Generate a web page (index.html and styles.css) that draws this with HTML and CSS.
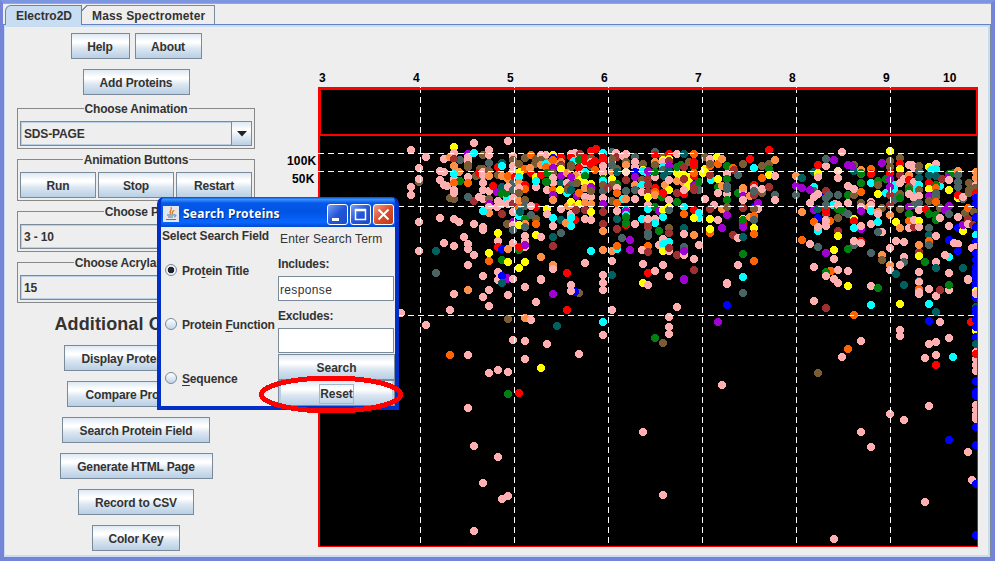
FILE: index.html
```html
<!DOCTYPE html>
<html lang="en">
<head>
<meta charset="utf-8">
<title>Electro2D</title>
<link rel="stylesheet" href="styles.css">
</head>
<body>
<div class="window">
  <nav class="tabs">
    <div class="tab selected">Electro2D</div>
    <div class="tab">Mass Spectrometer</div>
  </nav>
  <main class="pane">
    <section class="controls">
      <div class="row top"><button class="btn w59">Help</button><button class="btn w67">About</button></div>
      <button class="btn w107 add">Add Proteins</button>
      <div class="group"><span class="legend">Choose Animation</span>
        <div class="combo"><span>SDS-PAGE</span><i class="drop"><svg width="10" height="6"><path d="M0 0h10L5 5.5z" fill="#222"/></svg></i></div>
      </div>
      <div class="group g2"><span class="legend">Animation Buttons</span>
        <div class="trio"><button class="btn">Run</button><button class="btn">Stop</button><button class="btn">Restart</button></div>
      </div>
      <div class="group"><span class="legend">Choose PH</span>
        <div class="combo"><span>3 - 10</span><i class="drop"></i></div>
      </div>
      <div class="group"><span class="legend">Choose Acrylamide %</span>
        <div class="combo"><span>15</span><i class="drop"></i></div>
      </div>
      <h1>Additional Options</h1>
      <div class="stack">
        <button class="btn w144">Display Protein List</button>
        <button class="btn w138">Compare Proteins</button>
        <button class="btn w148">Search Protein Field</button>
        <button class="btn w153">Generate HTML Page</button>
        <button class="btn w116">Record to CSV</button>
        <button class="btn w88">Color Key</button>
      </div>
    </section>
    <svg class="plot" width="710" height="490" viewBox="275 60 710 490">
      <g class="axis">
        <text x="319" y="82">3</text><text x="413" y="82">4</text><text x="507" y="82">5</text><text x="601" y="82">6</text><text x="695" y="82">7</text><text x="789" y="82">8</text><text x="883" y="82">9</text><text x="943" y="82">10</text>
        <text x="287" y="165">100K</text><text x="292" y="183">50K</text>
      </g>
      <g shape-rendering="crispEdges">
        <rect x="318" y="87" width="660" height="460" fill="#f00"/>
        <rect x="321" y="90" width="655" height="44" fill="#000"/>
        <rect x="320" y="136" width="657" height="410" fill="#000"/>
        <svg x="320" y="136" width="657" height="410" viewBox="320 136 657 410"><g id="spots"></g></svg>
        <path class="grid" d="M420.5 87V546M514.5 87V546M608.5 87V546M702.5 87V546M796.5 87V546M890.5 87V546M318 153.5H976M318 171.5H976M318 206.5H976M318 315.5H976"/>
        <path d="M318 88.500H978M318 135H978" stroke="#f00" stroke-width="2"/>
      </g>
    </svg>
  </main>
</div>

<div class="dialog">
  <header class="titlebar">
    <svg class="java" width="16" height="16"><rect width="16" height="16" fill="#e4e6ea"/><path d="M8 8C5 5 10 4 8 1M10 8c-2-2 1-3 1-4" fill="none" stroke="#e87820" stroke-width="1.300"/><path d="M4 9h7M5 11h5M3 13.500h10M11 9c3-1 2 2 0 2" fill="none" stroke="#50799d"/></svg>
    <span class="title">Search Proteins</span>
    <i class="wb"><svg width="21" height="21"><path d="M5 14h7v3H5z" fill="#fff"/></svg></i>
    <i class="wb"><svg width="21" height="21"><path d="M5.500 5.500h10v10h-10zM5 6.500h11" fill="none" stroke="#fff" stroke-width="1.500"/></svg></i>
    <i class="wb close"><svg width="21" height="21"><path d="M5.500 5.500l10 10M15.500 5.500l-10 10" stroke="#fff" stroke-width="2"/></svg></i>
  </header>
  <div class="body">
    <div class="fields">
      <div class="head">Select Search Field</div>
      <div class="radio"><i class="dot on"></i><span>Pro<u>t</u>ein Title</span></div>
      <div class="radio"><i class="dot"></i><span>Protein <u>F</u>unction</span></div>
      <div class="radio"><i class="dot"></i><span><u>S</u>equence</span></div>
    </div>
    <div class="terms">
      <div class="enter">Enter Search Term</div>
      <div class="lab">Includes:</div>
      <div class="input">response</div>
      <div class="lab">Excludes:</div>
      <div class="input"></div>
      <button class="btn">Search</button>
      <button class="btn reset"><span>Reset</span></button>
    </div>
  </div>
</div>
<svg class="marker" width="146" height="42"><ellipse cx="73" cy="20.500" rx="69.500" ry="16.500" fill="none" stroke="#f00" stroke-width="5" shape-rendering="crispEdges"/></svg>
<script src="spots.js"></script>
</body>
</html>
```
FILE: styles.css
```css
* { box-sizing: border-box; }
body { margin: 0; width: 995px; height: 561px; overflow: hidden; position: relative; background: #eee; font: bold 12px/14px "Liberation Sans", Arial, sans-serif; color: #333; letter-spacing: -.16px; }
.window { width: 995px; height: 561px; border: solid #7485d9; border-top-color: #7d96e2; border-width: 3px 4px 3px 3px; display: flex; flex-direction: column; background: #eee; box-shadow: inset 0 1px #8fa6ea; }
.tabs { height: 21px; display: flex; align-items: flex-end; padding-left: 2px; }
.tab { height: 19px; width: 133px; padding: 3px 0 0 10px; border: 1px solid #7a8a99; border-width: 1px 1px 0 0; letter-spacing: .16px; white-space: nowrap; position: relative; }
.tab:not(.selected)::before { content: ""; position: absolute; left: 0; top: -1px; width: 6px; height: 6px; background: linear-gradient(135deg, #eee 0 3.500px, #7a8a99 3.500px 4.500px, transparent 4.500px); }
.tab.selected { height: 20px; width: 77px; background: #c8ddf2; border: 1px solid #6382bf; border-bottom: 0; border-top-left-radius: 6px; padding-top: 3px; margin-bottom: -1px; z-index: 1; letter-spacing: 0; }
.pane { flex: 1; border: 1px solid #7a8a99; border-top-color: #6382bf; box-shadow: inset 1px 2px #c8ddf2, inset -2px -2px #c8ddf2; display: flex; }
.controls { width: 251px; padding: 8px 0 0 13px; display: flex; flex-direction: column; align-items: center; flex: none; }
.controls > * { flex: none; }
.btn { height: 26px; padding: 1px 0 0; border: 1px solid #7a8a99; border-radius: 0; font: inherit; color: #333; letter-spacing: inherit; text-align: center; white-space: nowrap; background: linear-gradient(#dde8f3 0, #fff 30%, #fff 36%, #dbe6f1 60%, #b8cfe5 100%); }
.row { display: flex; gap: 5px; }
.w59 { width: 59px; } .w67 { width: 67px; } .w107 { width: 107px; } .w144 { width: 144px; } .w138 { width: 138px; } .w148 { width: 148px; } .w153 { width: 153px; } .w116 { width: 116px; } .w88 { width: 88px; }
.add { margin: 10px 0 6px; }
.group { width: 238px; height: 48px; margin-bottom: 3px; padding: 0 2px; position: relative; display: flex; flex-direction: column; align-items: center; }
.group::before { content: ""; position: absolute; inset: 7px 0 0 0; border: 1px solid #888; }
.group.g2 { height: 49px; margin-bottom: 3px; }
.legend { position: relative; background: #eee; padding: 0 1px; height: 14px; margin-top: 1px; }
.combo { position: relative; margin-top: 5px; width: 232px; height: 25px; border: 1px solid #7a8a99; box-shadow: inset 0 0 0 1px #b8cfe5; display: flex; justify-content: space-between; align-items: center; padding-left: 3px; }
.drop { width: 20px; height: 23px; border-left: 1px solid #7a8a99; background: linear-gradient(#dde8f3, #fff 35%, #b8cfe5); display: flex; align-items: center; justify-content: center; }
.trio { position: relative; margin-top: 5px; display: grid; grid-template-columns: repeat(3, 76px); gap: 2px; }
h1 { font-size: 18px; line-height: 22px; margin: 7px 0 10px; letter-spacing: .12px; }
.stack { display: flex; flex-direction: column; align-items: center; gap: 10px; }
.plot { margin: 35px 0 0 20px; flex: none; }
.axis text { font: bold 12px "Liberation Sans", Arial, sans-serif; fill: #000; letter-spacing: .2px; }
.grid { stroke: #fff; stroke-width: 1; stroke-dasharray: 6 4; fill: none; }
.dialog { position: absolute; left: 157px; top: 197px; width: 242px; height: 213px; border: solid #0030c8; border-width: 0 4px 4px; border-radius: 7px 7px 0 0; background: #0050e0; overflow: hidden; box-shadow: inset 0 0 0 1px #0855dd; }
.titlebar { margin: 0 -4px; height: 30px; padding: 4px 5px 0 6px; background: linear-gradient(#0048d0 0, #3a94ff 8%, #0558e8 20%, #0054e3 50%, #0866ff 85%, #0048d0 100%); display: flex; align-items: center; }
.title { flex: 1; margin-left: 4px; color: #fff; font: bold 12px/16px "Noto Sans", sans-serif; letter-spacing: .25px; text-shadow: 1px 1px #002a80; }
.wb { width: 21px; height: 21px; margin-left: 2px; border: 1px solid #fff; border-radius: 3px; background: linear-gradient(135deg, #7ba0f5, #2356d8 50%, #1a4bc8); display: flex; align-items: center; justify-content: center; overflow: hidden; }
.wb svg { flex: none; }
.close { background: linear-gradient(135deg, #f0a088, #dc4d28 50%, #b83818); }
.body { height: 179px; background: #eee; display: grid; grid-template-columns: 117px 117px; }
.fields { white-space: nowrap; }
.head { padding: 2px 0 0 1px; height: 16px; }
.radio { height: 54px; display: flex; align-items: center; padding-left: 4px; }
.radio span { padding-top: 2px; }
.dot { width: 12px; height: 12px; border-radius: 50%; border: 1px solid #7a8a99; background: linear-gradient(#fff, #c0d4e8); margin-right: 5px; flex: none; }
.dot.on { background: radial-gradient(circle, #222 0 3px, #e8f0f8 3.600px); }
u { text-decoration: underline; text-underline-offset: 2px; }
.terms { display: flex; flex-direction: column; }
.enter { font-weight: normal; padding: 5px 0 0 2px; height: 28px; letter-spacing: .15px; white-space: nowrap; }
.lab { height: 21px; padding-top: 2px; }
.input { height: 25px; margin: 0 1px 6px 0; background: #fff; border: 1px solid #7a8a99; font-weight: normal; padding: 6px 0 0 1px; letter-spacing: .35px; }
.input + .btn { margin-top: -5px; }
.terms .btn { width: 117px; flex: none; letter-spacing: 0; }
.reset { border-color: #7a8a99; box-shadow: inset 2px 0 #b8cfe5, inset -2px 0 #b8cfe5; }
.reset span { border: 1px solid #a3b8cc; padding: 2px 0; }
.marker { position: absolute; left: 258px; top: 374px; }
```
FILE: spots.js
```js
// Protein spots, grouped by plot region. Each entry is a colour letter followed by
// an x,y offset from the region origin, in thirds of a pixel, in stacking order.
const colors = { p: '#ffafaf', y: '#ffff00', c: '#00ffff', r: '#ff0000', g: '#008010', t: '#006060', s: '#486464', w: '#7a5c34', o: '#ff6400', l: '#ff9048', m: '#a03030', v: '#a000d0', b: '#0000ff', k: '#ffdcc0' };
const regions = [
  [400, 130, `p33,61 p78,81 p57,113 w57,155 p57,148 p33,171 p33,195 p57,275 p57,363 t108,363 s108,429 p120,264 p120,124 p132,87 p132,126 p120,150 p132,164 p142,168 l150,82 s180,90 y162,50 p162,70 m162,87 l162,108 l178,126 p162,146 c162,131 g180,153 o162,158 p162,180 w150,204 w162,208 p162,190
  p162,267 p177,275 p132,339 p162,348 p192,321 p204,342 p204,358 p222,375 p204,405 v204,72 p204,81 p204,92 w204,104 w204,112 p204,140 o204,158 s204,201 m222,213 p222,39 c222,69 p222,282 w249,74 p267,60 p267,75 s267,99 w240,116 w228,138 r236,128 w249,117 p249,126 s249,141 p249,134 w267,123 l267,138 p249,160 p249,180 p267,183 p237,200 p249,206 w267,206 v267,222 p267,232 l267,250 c249,243 p249,290 p249,300 p249,438 y267,369 o267,393
  t306,98 r293,111 c306,108 w293,134 l306,138 r280,169 v292,186 t306,170 p293,212 g306,192 c322,205 g318,190 p306,222 p292,232 m306,252 y293,309 p293,333 r293,351 p293,426 b306,357 g306,390 b306,438 y324,396 v322,444 l324,357 p324,33 p324,222 p339,78 w339,90 p339,108 p339,122 l324,147 s339,158 p324,170 s339,180 p339,205 m339,222 p339,245 v339,275 w322,282 p339,286 s339,300 p339,338 p339,447 o324,138
  w357,102 w375,84 r345,140 y360,125 c357,140 o375,118 l357,160 r375,165 o375,176 p357,175 w357,190 l357,212 w375,210 o357,235 c357,258 t360,245 s375,228 g375,267 l375,282 y357,285 s375,291 p375,318 p375,333 p375,352 g357,360 r357,351 v375,345 y375,396 y357,414 o393,75 w408,87 w422,80 w405,103 r393,130 l390,115 r424,135 y408,140 p408,170 c408,153 g440,156 r408,231 p393,228 s393,255 w408,268 o408,282 y408,315 p423,321 l423,381 p423,447 p438,75 l438,95 o442,100 r440,114 r449,130 p440,180 y440,237 p440,252`],
  [540, 130, `p3,75 w3,90 l3,105 r3,136 c18,103 o18,112 g18,156 y39,75 l40,100 b40,83 o39,90 r64,80 l63,97 m63,104 w64,112 v39,115 y62,116 w39,130 g20,130 v63,138 p39,143 p39,160 t63,160 g20,157 o39,180 y60,180 v39,194 l39,210 y21,237 p21,252 c39,264 p39,288 t63,270 s63,309 t39,321 m39,348 p3,321 l3,381 l39,405 p39,417 r81,429 p3,447 p135,399 p63,237 l85,229 l79,280 p93,252 r106,270 c93,265 c93,288
  p93,72 p105,68 m120,72 r93,80 c103,94 w94,110 w93,105 g116,89 l80,130 p110,135 l104,138 v93,142 r116,114 y120,150 c80,189 p80,160 s93,165 m83,175 w83,180 t93,180 v110,198 o117,188 y93,215 l105,230 y118,222 m108,240 w110,160 r135,83 p135,100 r135,92 w154,83 c135,125 g135,137 y135,158 l135,175 w152,180 p153,200 p135,201 l135,220 m135,240 p135,267 p154,269 r152,62 r168,57 p154,95 w154,108 r165,92 r154,102 o165,120 y152,163 v154,170 w153,183 l154,222 y153,246 c153,363
  c190,68 y189,130 r189,80 r189,94 p189,108 p190,125 g190,146 c189,153 w189,165 o205,175 s189,183 p189,205 v189,222 m189,246 m189,282 l189,303 l189,360 p189,435 s216,66 p228,70 m231,82 p216,97 w216,87 l216,125 w231,117 s216,104 t231,126 y216,148 g231,163 w216,165 p231,175 o231,188 c249,207 w216,213 o231,220 p231,243 t231,267 m231,297 l216,363 c231,357 o231,348 p216,393 t216,435 s246,324
  p248,78 p258,72 w258,96 l258,106 k258,126 m258,150 s258,183 l258,206 c258,240 v258,243 c258,255 g258,262 r258,285 g258,280 p285,282 v270,330 v270,360 s285,82 p285,96 p285,111 b285,127 v285,140 l285,165 s285,180 p285,207 w308,103 y308,120 c308,124 w307,150 c306,165 p306,185 c322,130 v323,123 m323,146 s345,66 r345,74 l345,95 w345,104 p345,140 g345,125 m323,165 m323,185 y324,202 p324,225 c324,238
  w368,82 y369,90 p369,95 c369,110 s369,120 t373,138 l375,165 r345,174 o345,185 l345,194 g366,201 p387,210 r387,72 y387,87 m387,94 v387,107 t387,124 p387,150 y387,180 l410,153 y410,129 p410,72 g410,110 m410,190 r431,193 p431,180 t432,72 m432,111 y433,135 m433,147 y445,156 g345,230 v356,244 y369,240 c369,262 y387,232 s387,240 g411,215 c432,231 o432,252 p345,267 c345,279 m324,278 c306,267 p324,267 m324,292 s324,308 g357,303 w387,295 m387,310 t432,294 p432,312
  p369,327 p357,345 c369,342 y369,363 c387,336 p387,363 m387,354 s324,318 o324,348 p306,360 m324,366 m411,375 p309,402 r324,429 p345,423 p369,405 p387,438 v432,363 p432,376 v432,447 m205,175 r370,190`],
  [680, 130, `t12,72 o42,72 g3,105 m12,111 w26,96 r42,96 g42,112 r42,105 y3,134 l12,160 y26,156 y30,140 r42,138 o42,130 y18,175 r12,190 p12,180 m12,147 v42,165 g58,157 s58,180 m42,180 m42,174 c12,231 o12,252 r42,240 c58,250 c58,264 y42,264 t12,294 p12,312 l42,315 s12,352 p12,376 v12,363 p57,345 p42,387 m42,420 v12,447
  w75,81 y75,117 y70,130 l89,90 p89,88 o89,108 w89,102 y112,81 o114,102 l126,87 g141,107 o158,114 m162,120 c92,150 y90,136 m90,136 y114,147 g114,170 p114,189 l126,168 p141,132 g141,148 p141,192 s141,168 s141,176 g141,210 s174,135 g174,190 w189,102 r210,87 c222,114 w246,108 w267,102 g267,117 y267,135 r267,60 l285,90 p285,138 o246,144 p75,207 p102,225 m90,237 l126,237 w141,231 v141,255 p114,270 y90,267 o90,309 y90,297 v126,294 m158,315 p174,324 t189,321
  p189,184 l189,174 v189,198 p189,210 m189,234 l210,198 r222,165 p222,174 m222,194 s222,183 w246,190 p246,178 m267,171 s285,195 p285,210 y189,267 r189,280 g189,271 v189,291 b222,231 v234,219 p234,237 w222,238 l210,262 o222,258 s222,270 y222,294 o222,312 g189,372 o222,393 p174,405 c189,440 p141,459 l348,138 v348,168 s348,195 t366,144 v366,174 l366,246 o366,330 s438,87 p438,108 r414,105 t402,126 y414,130 p414,141 c402,171 s402,183 v390,180 p414,192 p402,200 p390,219 v402,240 t414,237 b414,264 o402,276 c414,303 p414,290 p390,342 s414,351 v438,369 p402,411 g438,429 p438,438 o450,422
  b438,192 m438,183 s438,205 w438,228 r438,240 s438,252 p438,282 p438,270`],
  [825, 130, `p3,108 s3,87 v27,90 p51,66 k39,123 p39,144 m3,183 s12,195 s39,195 p30,222 c24,225 g39,237 p39,225 w39,264 o15,272 p3,288 p3,272 m39,303 y39,318 y27,360 v3,369 p27,387 o15,423 p39,420 p69,423 p27,447 g3,432 r3,246 s3,225 s58,246 g48,240 s69,252 p69,219 v69,105 w87,105 t87,122 g69,195 w87,195 p69,168 p87,176 v81,107
  l108,120 w108,132 g108,129 g108,160 o108,186 w108,219 p108,232 v108,243 y87,267 r87,272 v108,297 c87,294 s87,345 p108,288 r108,333 p108,339 p87,333 g69,357 o138,116 r138,132 c138,160 l132,230 p138,217 m138,222 p138,225 c138,243 p138,282 s138,369 g158,153 w158,165 y158,192 w170,234 l158,246 c158,276 p158,252 p171,306 s158,306 l171,375 w171,390 v171,99 g182,148 c182,190
  c210,165 s210,190 c208,177 s208,210 w196,92 y196,63 w196,112 r196,130 v196,148 v196,172 m196,195 m196,225 l196,255 p195,354 l195,405 p195,420 t213,432 p213,333 y213,276 l225,294 w225,84 r225,102 y225,118 m225,135 p225,159 w225,192 g225,205 w225,236 p237,147 p237,336 p237,381 s237,396 p225,405
  p252,104 p262,104 p267,115 l252,135 r252,150 p267,155 c267,180 w252,170 g252,180 p252,192 p267,205 s267,225 v252,231 g252,252 o252,272 p252,294 m267,290 p267,270 s282,122 w282,108 t282,145 c282,165 w282,180 p282,198 s282,220 p282,240 y282,272 p282,290 m282,365 l282,345 y282,378 p282,427 t282,452 g300,396 y312,110 c318,120 t312,135 r312,159 y312,176 v312,198 r302,237 w312,212 g312,252 s312,294 t312,316 o312,333 s312,345
  p333,102 c333,118 t333,137 c345,167 g333,165 o333,175 w333,200 s333,188 o333,215 w345,234 g333,255 g333,270 p345,265 p333,318 p333,396 t333,414 m352,147 g372,132 v372,140 p372,150 y372,180 v360,240 v372,228 s372,252 p372,288 b372,330 p387,340 p399,342 c372,381 p360,375 p372,429 g388,128 l399,123 s399,135 s399,155 s399,170 y399,205 r399,196 p399,261 b399,294 b399,363 t414,414 s414,207 p414,200
  y414,303 v414,285 w421,250 m429,267 o429,234 w432,158 w432,180 w432,190 p429,282 l453,125 l453,145 p453,165 w450,175 r453,188 b453,205 b453,222 w448,246 m444,286 b453,260 b453,292 c453,315 b453,335 p441,354 p453,350 b453,370 b453,390 b453,410 b453,430 p429,448`],
  [400, 270, `p4,129 p78,165 p162,72 p150,120 l204,60 o150,255 p204,255 p204,414 p222,528 p249,639 p222,783 p249,18 p249,81 p267,60 p267,108 p293,6 p293,29 v322,28 b306,18 t306,39 p324,75 p339,27 w324,147 p324,306 p293,300 p267,309 p339,210 g324,372 r357,369 p294,561 p324,678 p306,687 y357,-6 p375,51 l375,144 p393,150 p375,213 p375,267 p408,96 p423,30 y423,294 p441,222 v459,72 t471,168 p459,-3 r501,9 r501,120 w538,69 b526,66 p513,45 p513,63 p537,252 p609,15 p609,39 p609,60 c609,156 p609,195 t636,15 p636,120 y729,39 r744,9 p744,45 p765,3 p807,18 v852,30 m882,0 p831,111 p807,141 p807,171 p807,192 g765,204 w789,219 p729,486 p789,675`],
  [700, 270, `p81,38 p81,43 c129,21 s129,69 b81,105 v54,156 p66,345 p342,93 m378,114 o393,3 g378,6 p378,18 p402,27 p414,39 p414,0 p444,3 y444,48 p342,-9 c513,105 p513,48 g534,54 o462,135 p483,213 o444,237 p426,261 w354,309 p483,486 p513,531 p402,807 p570,432 p570,0 t588,12 t612,45 p612,450 y600,102 p600,180 p600,198 p657,6 p657,36 o657,58 p657,66 p657,71 p687,57 p708,78 m720,60 c687,102 t708,126 b687,153 p720,156 p747,9 p747,60 g747,45 p747,204 p708,216 p687,222 p708,255 p675,264 r708,285 c759,261 p687,408 b747,510 p804,30 p804,546 p816,630 p675,696 r812,156 t708,-6 t789,-6
  b827,5 b827,22 b827,40 b827,55 y827,62 b827,85 p827,72 t827,112 b827,116 b827,132 b827,150 y827,184 b827,172 b827,202 p827,245 t827,222 p827,268 r827,252 p827,285 p827,303 b827,333 b827,366 b827,378 p827,405 p827,420 p827,435 p827,447 b827,471 b827,525 b827,642 b827,796`]
];
const layer = document.getElementById('spots');
for (const [ox, oy, list] of regions) {
  for (const item of list.trim().split(/\s+/)) {
    const [x, y] = item.slice(1).split(',').map(Number);
    const c = document.createElementNS('http://www.w3.org/2000/svg', 'circle');
    c.setAttribute('cx', Math.round(ox + x / 3));
    c.setAttribute('cy', Math.round(oy + y / 3));
    c.setAttribute('r', 4);
    c.setAttribute('fill', colors[item[0]]);
    layer.appendChild(c);
  }
}
```
